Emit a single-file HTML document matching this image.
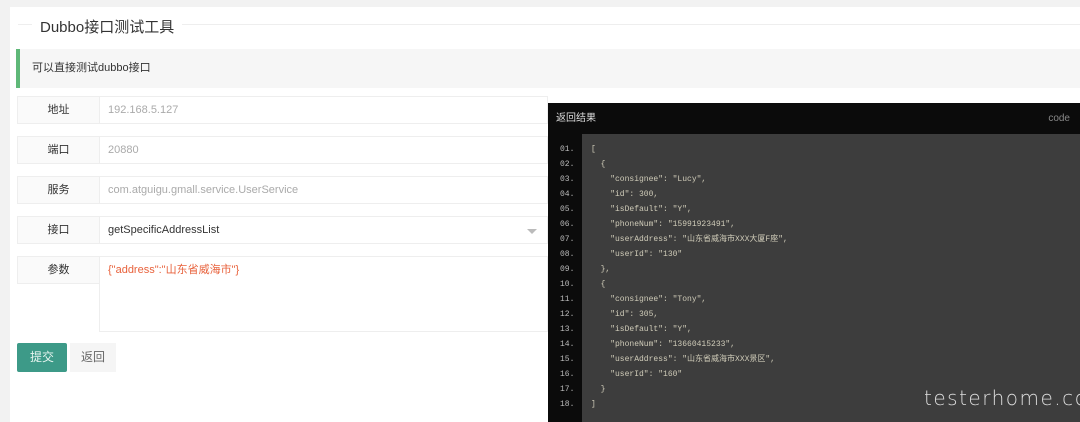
<!DOCTYPE html>
<html><head><meta charset="utf-8"><style>
*{margin:0;padding:0;box-sizing:border-box}
body{width:1080px;height:422px;background:#f2f2f2;position:relative;overflow:hidden;font-family:"Liberation Sans","Noto Sans CJK SC",sans-serif}
.card{position:absolute;left:10px;top:7px;width:1070px;height:415px;background:#fff}
.abs{position:absolute}
.title{left:32px;top:16px;font-size:15px;color:#333;background:#fff;padding:0 8px}
.tl{left:18px;top:24px;width:1062px;height:1px;background:#eee}
.note{left:16px;top:49px;width:1064px;height:39px;background:#f6f6f6;border-left:4px solid #5fb878;font-size:11px;color:#333;padding-left:12px;line-height:39px}
.lab{left:17px;width:83px;height:28px;background:#fafafa;border:1px solid #eee;font-size:11px;color:#333;text-align:center;line-height:26px}
.inp{left:99px;width:449px;height:28px;border:1px solid #eee;font-size:11px;color:#aaa;padding-left:8px;line-height:26px;background:#fff}
.code{left:548px;top:103px;width:532px;height:319px;background:#3d3d3d}
.hd{left:0;top:0;width:532px;height:31px;background:#0b0b0b;color:#ddd;font-size:10px;line-height:31px;padding-left:8px}
.gut{left:0;top:31px;width:34px;height:288px;background:#0b0b0b}
pre{font-family:"Liberation Mono","Noto Sans CJK SC",monospace;font-size:8px;line-height:15px;color:#cfcbb8}
</style></head><body>
<div class="card"></div>
<div class="abs tl"></div>
<div class="abs title">Dubbo接口测试工具</div>
<div class="abs note">可以直接测试dubbo接口</div>
<div class="abs lab" style="top:96px">地址</div><div class="abs inp" style="top:96px">192.168.5.127</div>
<div class="abs lab" style="top:136px">端口</div><div class="abs inp" style="top:136px">20880</div>
<div class="abs lab" style="top:176px">服务</div><div class="abs inp" style="top:176px">com.atguigu.gmall.service.UserService</div>
<div class="abs lab" style="top:216px">接口</div><div class="abs inp" style="top:216px;color:#333">getSpecificAddressList<span style="position:absolute;right:10px;top:12px;border:5px solid transparent;border-top:5px solid #bbb;border-bottom:0"></span></div>
<div class="abs lab" style="top:256px">参数</div><div class="abs inp" style="top:256px;height:76px;color:#e8623c;line-height:26px">{"address":"山东省威海市"}</div>
<div class="abs" style="left:17px;top:343px;width:50px;height:29px;background:#3d9a88;border-radius:2px;color:#e8f5f0;font-size:12px;text-align:center;line-height:29px">提交</div>
<div class="abs" style="left:70px;top:343px;width:46px;height:29px;background:#f5f5f5;color:#666;font-size:12px;text-align:center;line-height:29px">返回</div>
<div class="abs code">
<div class="abs hd">返回结果<span style="position:absolute;right:10px;color:#888">code</span></div>
<div class="abs gut"></div>
<pre class="abs" style="left:12px;top:39px;color:#bbb">01.
02.
03.
04.
05.
06.
07.
08.
09.
10.
11.
12.
13.
14.
15.
16.
17.
18.</pre>
<pre class="abs" style="left:43px;top:39px">[
  {
    "consignee": "Lucy",
    "id": 300,
    "isDefault": "Y",
    "phoneNum": "15991923491",
    "userAddress": "山东省威海市XXX大厦F座",
    "userId": "130"
  },
  {
    "consignee": "Tony",
    "id": 305,
    "isDefault": "Y",
    "phoneNum": "13660415233",
    "userAddress": "山东省威海市XXX景区",
    "userId": "160"
  }
]</pre>
<div class="abs" style="left:376px;top:283px;color:#ddd;font-size:20px;font-family:'DejaVu Sans',sans-serif;font-weight:200;letter-spacing:1.5px;white-space:nowrap">testerhome.com</div>
</div>
</body></html>
